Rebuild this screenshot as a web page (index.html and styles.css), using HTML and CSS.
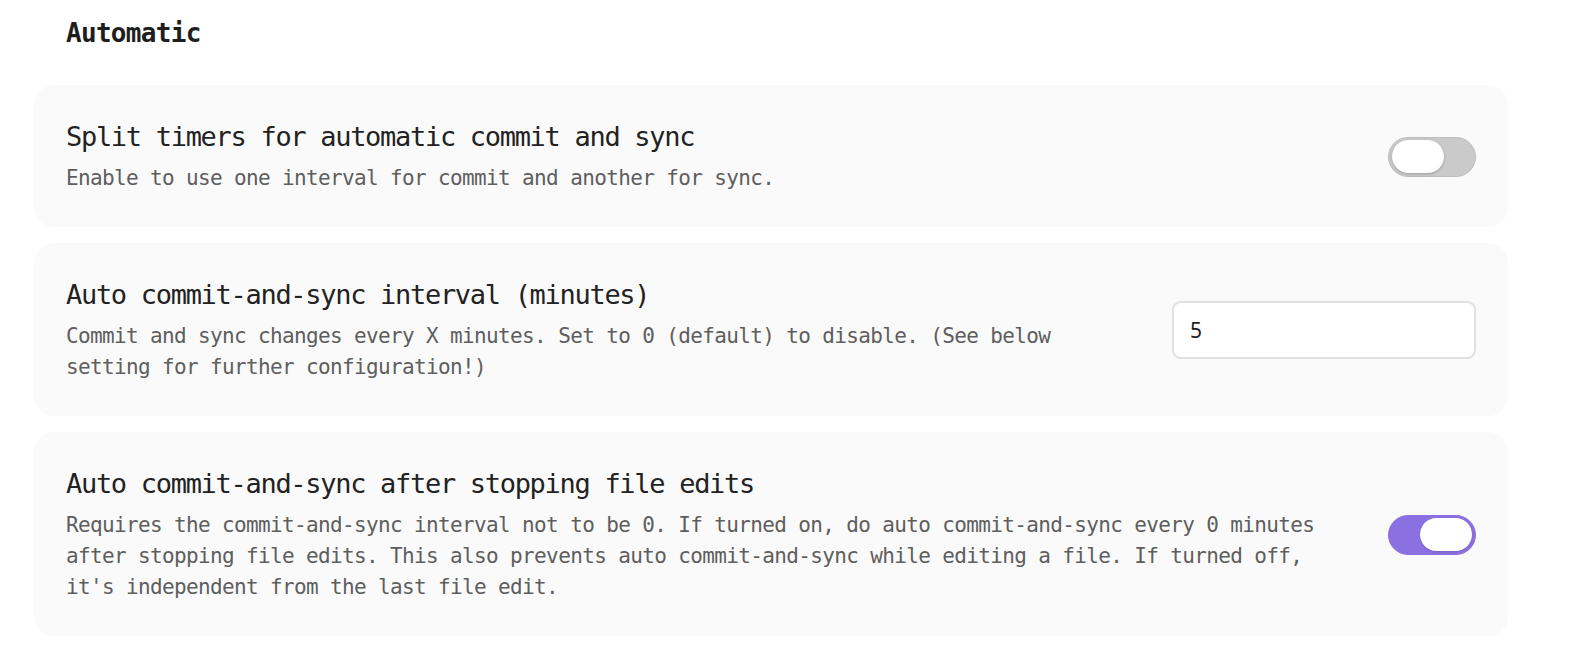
FILE: index.html
```html
<!DOCTYPE html>
<html>
<head>
<meta charset="utf-8">
<link rel="stylesheet" href="styles.css">
</head>
<body>
<div class="page">
  <h2 class="heading">Automatic</h2>
  <div class="list">
    <div class="item">
      <div class="info">
        <div class="name">Split timers for automatic commit and sync</div>
        <div class="desc">Enable to use one interval for commit and another for sync.</div>
      </div>
      <div class="control">
        <div class="toggle"><div class="knob"></div></div>
      </div>
    </div>
    <div class="item">
      <div class="info">
        <div class="name">Auto commit-and-sync interval (minutes)</div>
        <div class="desc">Commit and sync changes every X minutes. Set to 0 (default) to disable. (See below setting for further configuration!)</div>
      </div>
      <div class="control">
        <input class="text-input" type="text" value="5">
      </div>
    </div>
    <div class="item">
      <div class="info">
        <div class="name">Auto commit-and-sync after stopping file edits</div>
        <div class="desc">Requires the commit-and-sync interval not to be 0. If turned on, do auto commit-and-sync every 0 minutes after stopping file edits. This also prevents auto commit-and-sync while editing a file. If turned off, it's independent from the last file edit.</div>
      </div>
      <div class="control">
        <div class="toggle on"><div class="knob"></div></div>
      </div>
    </div>
  </div>
</div>
</body>
</html>
```
FILE: styles.css
```css
html, body {
  margin: 0;
  padding: 0;
  background: #ffffff;
}
body {
  font-family: "DejaVu Sans Mono", "Liberation Mono", monospace;
  color: #222222;
}
.page {
  padding: 15px 64px 0 34px;
}
.heading {
  margin: 0 0 34px 0;
  padding-left: 32px;
  font-size: 26px;
  line-height: 36px;
  font-weight: bold;
  letter-spacing: -0.7px;
  color: #1e1e1e;
}
.list {
  display: flex;
  flex-direction: column;
  gap: 16px;
}
.item {
  display: flex;
  align-items: center;
  gap: 40px;
  background: #fafafa;
  border-radius: 20px;
  padding: 34px 32px 33px 32px;
}
.info {
  flex: 1 1 auto;
  display: flex;
  flex-direction: column;
  gap: 8px;
  min-width: 0;
}
.name {
  font-size: 27px;
  line-height: 36px;
  letter-spacing: -1.3px;
  color: #222222;
}
.desc {
  font-size: 21px;
  line-height: 31px;
  letter-spacing: -0.64px;
  color: #5e5e5e;
}
.control {
  flex: 0 0 auto;
  display: flex;
  align-items: center;
}
.toggle {
  box-sizing: border-box;
  width: 88px;
  height: 40px;
  border-radius: 20px;
  background: #cacaca;
  border: 1px solid #bdbdbd;
  padding: 2px 3px;
  display: flex;
  align-items: center;
}
.toggle .knob {
  width: 52px;
  height: 33px;
  border-radius: 17px;
  background: #ffffff;
  box-shadow: 0 1px 3px rgba(0, 0, 0, 0.22);
}
.toggle.on {
  background: #8b70e1;
  border-color: #8b70e1;
  justify-content: flex-end;
}
.toggle.on .knob {
  box-shadow: 0 1px 2px rgba(0, 0, 0, 0.12);
}
.text-input {
  box-sizing: border-box;
  width: 304px;
  height: 58px;
  border: 2px solid #e0e0e0;
  border-radius: 9px;
  background: #ffffff;
  padding: 0 16px;
  font-family: "Noto Sans", "Open Sans", sans-serif;
  font-size: 21px;
  color: #222222;
  outline: none;
}
```
